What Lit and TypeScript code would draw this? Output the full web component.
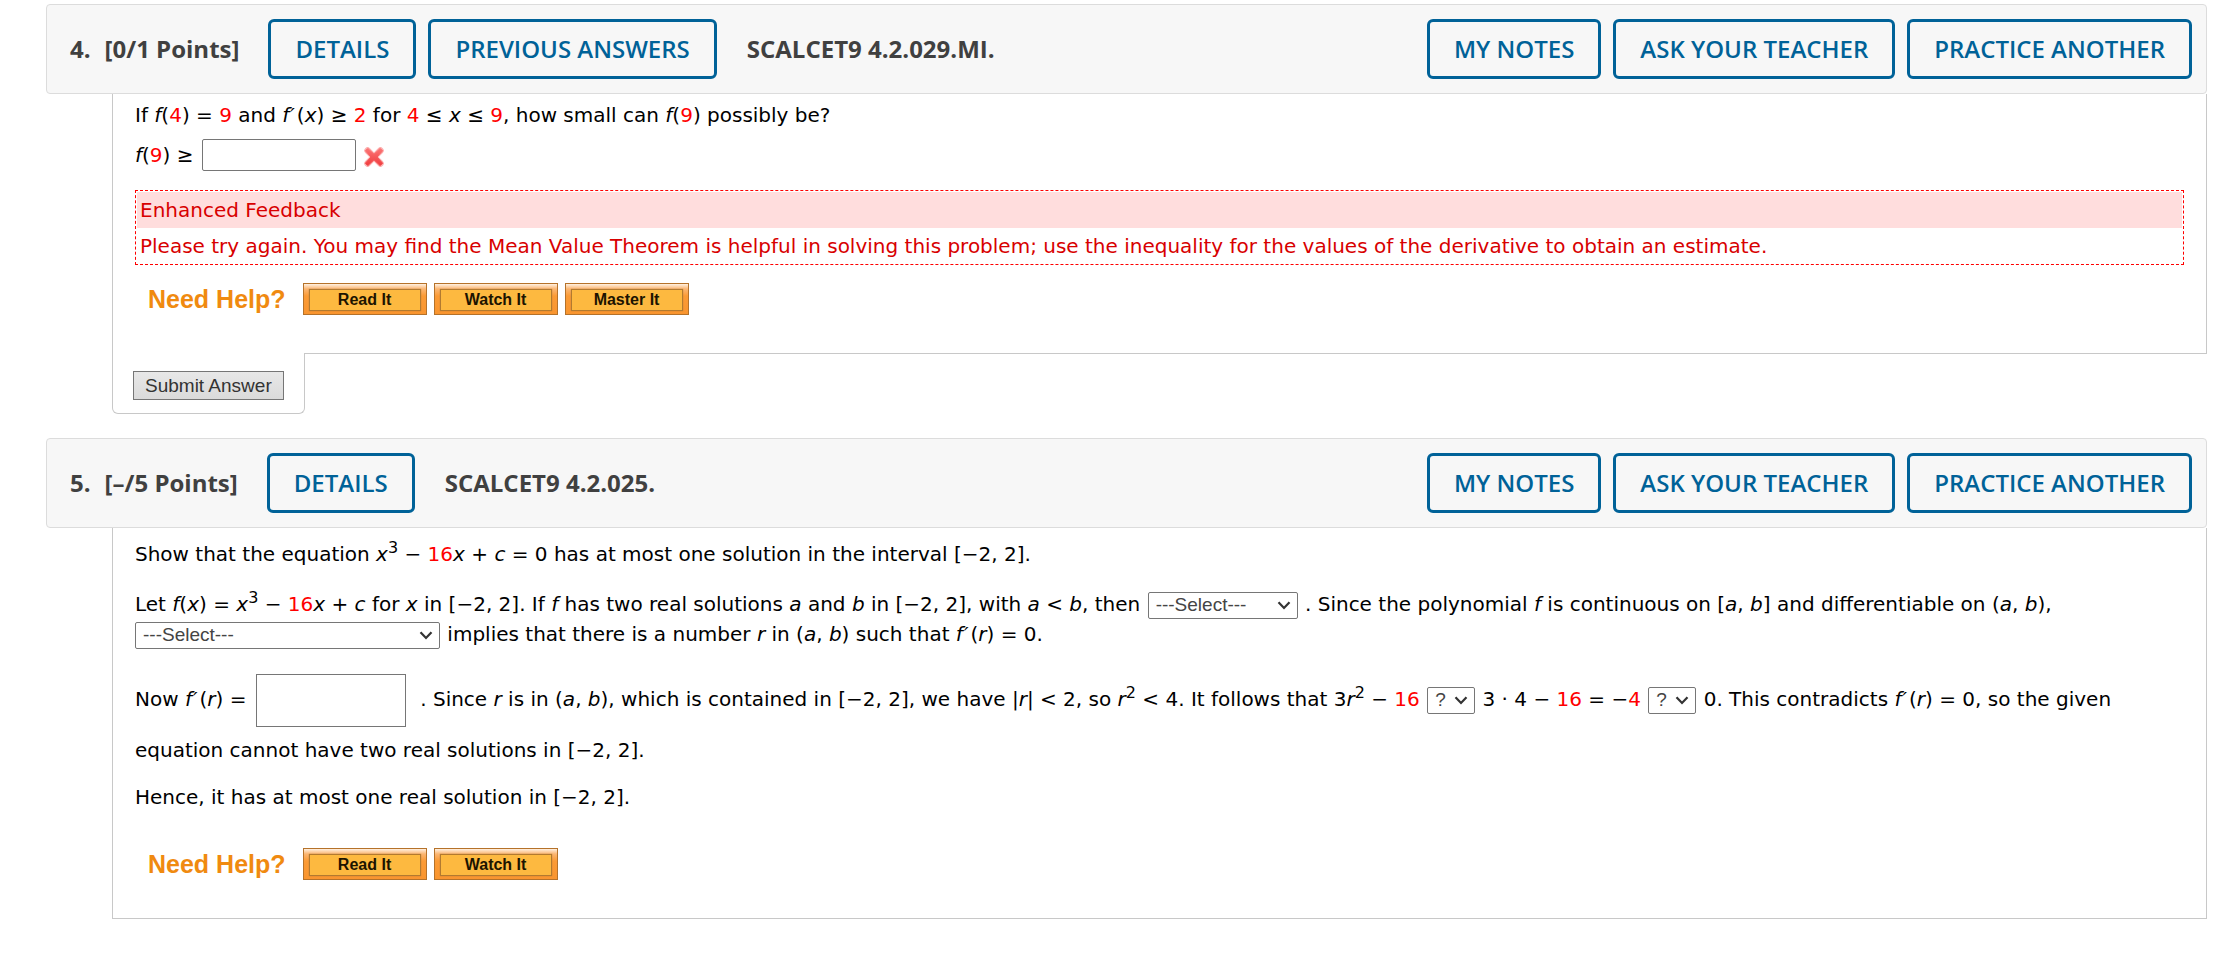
import { LitElement, html, css, nothing, TemplateResult } from "lit";
import { customElement, property } from "lit/decorators.js";

@customElement("question-header")
class QuestionHeader extends LitElement {
  @property() number = "";
  @property() points = "";
  @property() code = "";
  @property({ type: Boolean }) previous = false;

  static styles = css`
    :host {
      display: block;
    }
    .bar {
      display: flex;
      align-items: center;
      justify-content: space-between;
      flex-wrap: wrap;
      gap: 12px;
      padding: 14px;
      border: 1px solid #dcdcdc;
      border-radius: 4px;
      background: #f7f7f7;
      color: #404040;
      font: 700 24px/32px "Open Sans", sans-serif;
    }
    .info {
      display: flex;
      align-items: center;
      padding-left: 9px;
    }
    .title {
      display: flex;
      gap: 14px;
      margin: 0 29px 0 0;
      font: inherit;
    }
    .group {
      display: flex;
      gap: 12px;
    }
    .code {
      margin-left: 30px;
    }
    .action {
      box-sizing: border-box;
      height: 60px;
      padding: 0 24px;
      border: 3px solid #006298;
      border-radius: 6px;
      background: transparent;
      color: #006298;
      font: 600 24px/32px "Open Sans", sans-serif;
      text-transform: uppercase;
    }
  `;

  render() {
    return html`
      <header class="bar">
        <div class="info">
          <h2 class="title"><span>${this.number + "."}</span><span>${`[${this.points} Points]`}</span></h2>
          <div class="group">
            <button class="action" type="button">Details</button>
            ${this.previous
              ? html`<button class="action" type="button">Previous Answers</button>`
              : nothing}
          </div>
          <span class="code">${this.code}</span>
        </div>
        <div class="group">
          <button class="action" type="button">My Notes</button>
          <button class="action" type="button">Ask Your Teacher</button>
          <button class="action" type="button">Practice Another</button>
        </div>
      </header>
    `;
  }
}

@customElement("need-help")
class NeedHelp extends LitElement {
  @property({ type: Array }) links: string[] = [];

  static styles = css`
    :host {
      display: block;
    }
    .row {
      display: flex;
      align-items: center;
      gap: 7px;
      padding-left: 13px;
      font-family: "Liberation Sans", Arial, sans-serif;
    }
    .caption {
      margin-right: 10px;
      color: #f08a10;
      font-size: 25px;
      line-height: 32px;
      font-weight: 700;
    }
    .help {
      box-sizing: border-box;
      width: 124px;
      height: 32px;
      padding: 5px;
      border: 1px solid #b5722a;
      border-radius: 0;
      background: linear-gradient(#fff0e0, #fbb672 5px, #fb9b36 12px, #f9952f);
      color: #1c1400;
      font: 700 16px/20px "Liberation Sans", Arial, sans-serif;
    }
    .face {
      display: block;
      border: 1px solid #b27a30;
      background: #fdb940;
      box-shadow: 0 0 1px #b27a30;
    }
  `;

  render() {
    return html`
      <div class="row">
        <span class="caption">Need Help?</span>
        ${this.links.map(
          (l) => html`<button class="help" type="button"><span class="face">${l}</span></button>`
        )}
      </div>
    `;
  }
}

const f = html`<i>f</i>`;
const x = html`<i>x</i>`;
const r = html`<i>r</i>`;
const red = (v: string): TemplateResult => html`<span class="red">${v}</span>`;
const pair = html`(<i>a</i>, <i>b</i>)`;
const interval = html`<span class="math">[−2, 2]</span>`;
const cubic = html`<span class="math">${x}<sup>3</sup> − ${red("16")}${x} + <i>c</i></span>`;
const fPrime = html`<i>f</i><i class="prime">′</i>`;
const fPrimeR = html`${fPrime}(${r})`;

@customElement("app-root")
class AppRoot extends LitElement {
  static styles = css`
    :host {
      display: block;
      padding: 4px 17px 38px 46px;
      background: #fff;
      color: #000;
      font: 20px/30px "Verdana", "DejaVu Sans", sans-serif;
    }
    .question {
      margin-bottom: 24px;
    }
    .question:last-child {
      margin-bottom: 0;
    }
    .body {
      margin-left: 66px;
      padding: 6px 22px 0 22px;
      border: 0 solid #c8c8c8;
      border-width: 0 1px;
    }
    .body.tabbed {
      padding-bottom: 38px;
    }
    .body.closed {
      padding-top: 11px;
      padding-bottom: 38px;
      border-bottom-width: 1px;
    }
    .foot {
      display: flex;
      margin-left: 66px;
    }
    .tab {
      padding: 18px 20px 13px;
      border: 1px solid #c8c8c8;
      border-top: 0;
      border-radius: 0 0 6px 6px;
    }
    .rest {
      flex: 1;
      border-top: 1px solid #c8c8c8;
    }
    .submit {
      box-sizing: border-box;
      display: block;
      height: 29px;
      padding: 0 11px;
      border: 1px solid #767676;
      border-radius: 0;
      background: linear-gradient(#e8e8e8, #dadada);
      color: #333;
      font: 19px/24px "Liberation Sans", Arial, sans-serif;
    }
    p {
      margin: 0;
    }
    .math {
      white-space: nowrap;
    }
    .red {
      color: #f00;
    }
    .prime {
      margin: 0 2px 0 1px;
    }
    sup {
      font-size: 16px;
      line-height: 0;
      vertical-align: 8px;
    }
    .answer {
      display: flex;
      align-items: center;
      gap: 8px;
      margin-top: 9px;
    }
    .box {
      box-sizing: border-box;
      border: 1px solid #767676;
      border-radius: 2px;
      padding: 2px 4px;
      background: #fff;
      font: 19px/24px "Liberation Sans", Arial, sans-serif;
    }
    .small {
      width: 154px;
      height: 32px;
    }
    .large {
      width: 150px;
      height: 53px;
      border-radius: 0;
      margin: 0 8px 0 3px;
      vertical-align: middle;
    }
    .mark {
      display: block;
      width: 20px;
      height: 20px;
      margin-top: 4px;
    }
    .feedback {
      margin: 19px 0 18px;
      padding: 1px;
      border: 1px dashed #f00;
      color: #d80000;
    }
    .feedback-title {
      padding: 3px;
      background: #fdd;
    }
    .feedback-text {
      padding: 3px 3px 2px;
    }
    .pick {
      box-sizing: border-box;
      height: 27px;
      margin: 0 1px;
      padding: 0 24px 0 7px;
      border: 1px solid #767676;
      border-radius: 2px;
      appearance: none;
      background: #fff
        url("data:image/svg+xml,%3Csvg xmlns='http://www.w3.org/2000/svg' width='14' height='9' viewBox='0 0 14 9'%3E%3Cpath d='M1.5 1.2 7 7 12.5 1.2' fill='none' stroke='%23333' stroke-width='2.2'/%3E%3C/svg%3E")
        no-repeat right 6px center;
      color: #444;
      font: 19px/24px "Liberation Sans", Arial, sans-serif;
      vertical-align: baseline;
    }
    .word {
      width: 150px;
    }
    .theorem {
      width: 305px;
      margin-left: 0;
    }
    .sign {
      width: 48px;
    }
    .setup {
      margin-top: 20px;
    }
    .derive {
      margin-top: 25px;
      line-height: 47px;
    }
    .finish {
      margin: 8px 0 36px;
    }
  `;

  render() {
    return html`
      <section class="question">
        <question-header number="4" points="0/1" code="SCALCET9 4.2.029.MI." previous></question-header>
        <div class="body tabbed">
          <p>If ${f}(${red("4")}) = ${red("9")} and ${fPrime}(${x}) ≥ ${red("2")} for ${red("4")} ≤ ${x} ≤ ${red("9")}, how small can ${f}(${red("9")}) possibly be?</p>
          <div class="answer">
            <label for="bound">${f}(${red("9")}) ≥</label>
            <input id="bound" class="box small" type="text" />
            <svg class="mark" viewBox="0 0 20 20" role="img" aria-label="Incorrect">
              <defs>
                <linearGradient id="cross" x1="0" y1="0" x2="0" y2="1">
                  <stop offset="0" stop-color="#fb7474" />
                  <stop offset="1" stop-color="#f03c3e" />
                </linearGradient>
              </defs>
              <path d="M3.6 3.6 16.4 16.4M16.4 3.6 3.6 16.4" fill="none" stroke="#fcb0b0" stroke-width="6.6" stroke-linecap="round" />
              <path d="M3.8 1.4 10 7.2 16.2 1.4 18.6 3.8 13 10 18.6 16.2 16.2 18.6 10 12.8 3.8 18.6 1.4 16.2 7 10 1.4 3.8Z"
                fill="url(#cross)" stroke="url(#cross)" stroke-width="1" stroke-linejoin="round" />
            </svg>
          </div>
          <div class="feedback">
            <div class="feedback-title">Enhanced Feedback</div>
            <div class="feedback-text">Please try again. You may find the Mean Value Theorem is helpful in solving this problem; use the inequality for the values of the derivative to obtain an estimate.</div>
          </div>
          <need-help .links=${["Read It", "Watch It", "Master It"]}></need-help>
        </div>
        <div class="foot">
          <div class="tab"><button class="submit" type="button">Submit Answer</button></div>
          <div class="rest"></div>
        </div>
      </section>

      <section class="question">
        <question-header number="5" points="–/5" code="SCALCET9 4.2.025."></question-header>
        <div class="body closed">
          <p>Show that the equation ${cubic} = 0 has at most one solution in the interval ${interval}.</p>
          <p class="setup">Let ${f}(${x}) = ${cubic} for ${x} in ${interval}. If ${f} has two real solutions <i>a</i> and <i>b</i> in ${interval}, with <i>a</i> &lt; <i>b</i>, then
            <select class="pick word" aria-label="Connecting word"><option>---Select---</option></select>
            . Since the polynomial ${f} is continuous on <span class="math">[<i>a</i>, <i>b</i>]</span> and differentiable on <span class="math">${pair},</span>
            <select class="pick theorem" aria-label="Theorem"><option>---Select---</option></select>
            implies that there is a number ${r} in ${pair} such that ${fPrimeR} = 0.</p>
          <p class="derive"><label for="derivative">Now ${fPrimeR} =</label>
            <input id="derivative" class="box large" type="text" />
            . Since ${r} is in ${pair}, which is contained in ${interval}, we have |${r}| &lt; 2, so ${r}<sup>2</sup> &lt; 4. It follows that 3${r}<sup>2</sup> − ${red("16")}
            <select class="pick sign" aria-label="First comparison"><option>?</option></select>
            3 · 4 − ${red("16")} = −${red("4")}
            <select class="pick sign" aria-label="Second comparison"><option>?</option></select>
            0. This contradicts ${fPrimeR} = 0, so the given equation cannot have two real solutions in ${interval}.</p>
          <p class="finish">Hence, it has at most one real solution in ${interval}.</p>
          <need-help .links=${["Read It", "Watch It"]}></need-help>
        </div>
      </section>
    `;
  }
}
